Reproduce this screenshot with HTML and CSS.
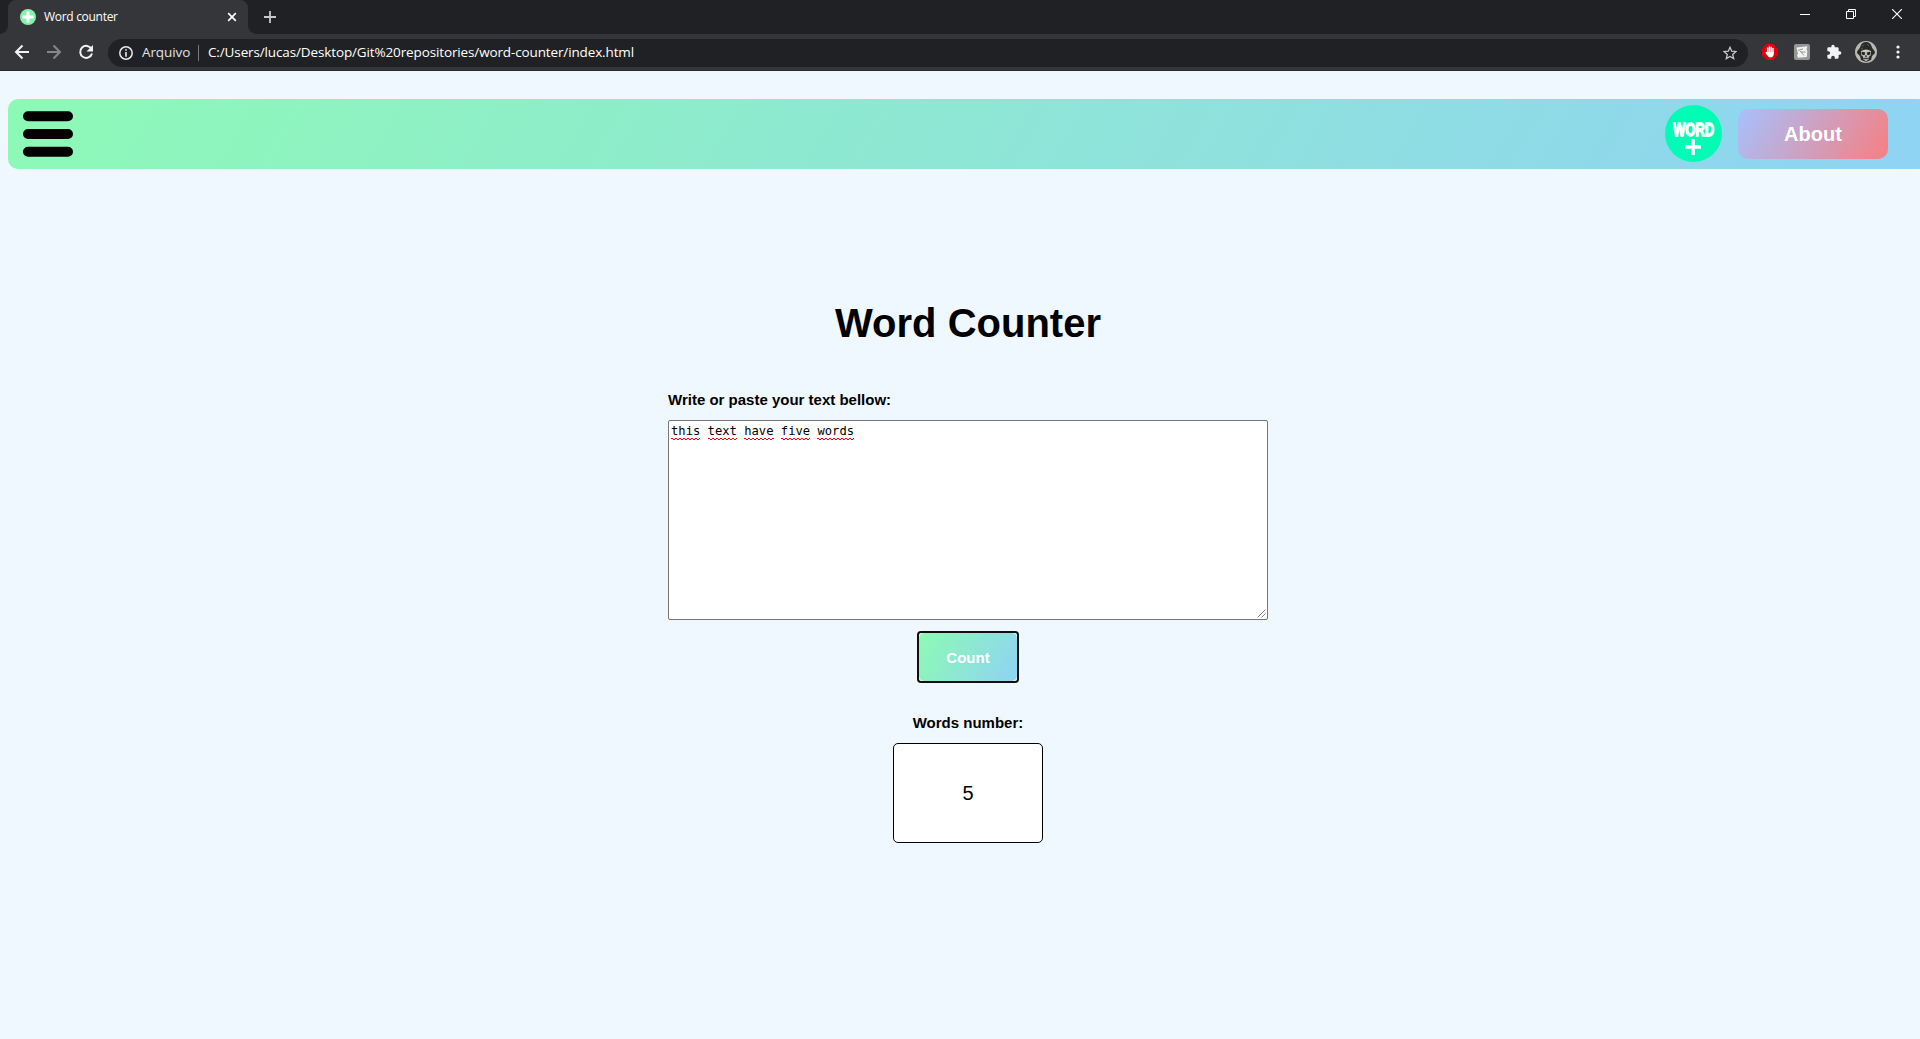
FILE: index.html
```html
<!DOCTYPE html>
<html lang="pt-BR">
<head>
<meta charset="utf-8">
<title>Word counter</title>
<link rel="stylesheet" href="styles.css">
</head>
<body>
<header class="browser">
  <div class="tabstrip">
    <div class="tab">
      <svg class="favicon" width="16" height="16" viewBox="0 0 16 16"><circle cx="8" cy="8" r="8" fill="#84f0ac"/><path d="M8 2.5v11M2.5 8h11" stroke="#fff" stroke-width="3"/></svg>
      <span class="tab-title">Word counter</span>
      <svg class="tab-close" width="10" height="10" viewBox="0 0 10 10"><path d="M1.2 1.2l7.6 7.6M8.8 1.2L1.2 8.8" stroke="#fff" stroke-width="1.7"/></svg>
    </div>
    <svg class="new-tab" width="12" height="12" viewBox="0 0 12 12"><path d="M6 0v12M0 6h12" stroke="#c6c8ca" stroke-width="1.8"/></svg>
    <div class="window-controls">
      <svg width="10" height="10" viewBox="0 0 10 10"><path d="M0 5.5h10" stroke="#fff"/></svg>
      <svg width="10" height="10" viewBox="0 0 10 10" fill="none" stroke="#fff"><path d="M.5 2.5h7v7h-7zM2.500 2V.5h7v7H8"/></svg>
      <svg width="10" height="10" viewBox="0 0 10 10"><path d="M0 0l10 10M10 0L0 10" stroke="#fff" stroke-width="1.1"/></svg>
    </div>
  </div>
  <div class="toolbar">
    <svg class="nav-icon" width="16" height="16" viewBox="0 0 16 16" fill="none" stroke="#f1f3f4" stroke-width="2"><path d="M15 8H2.500M8.500 1.500L2 8l6.500 6.500"/></svg>
    <svg class="nav-icon" width="16" height="16" viewBox="0 0 16 16" fill="none" stroke="#85878a" stroke-width="2"><path d="M1 8h12.500M7.500 1.500L14 8l-6.500 6.500"/></svg>
    <svg class="nav-icon" width="16" height="16" viewBox="0 0 16 16"><path d="M13.500 5A6 6 0 1 0 14 9.500" fill="none" stroke="#f1f3f4" stroke-width="2"/><path d="M15 1v6.500H8.500z" fill="#f1f3f4"/></svg>
    <div class="omnibox">
      <svg width="14" height="14" viewBox="0 0 14 14"><circle cx="7" cy="7" r="6.200" fill="none" stroke="#e8eaed" stroke-width="1.500"/><path d="M7 3.200v1.600M7 6v4.700" stroke="#e8eaed" stroke-width="1.600"/></svg>
      <span class="scheme">Arquivo</span>
      <span class="divider"></span>
      <span class="url">C:/Users/lucas/Desktop/Git%20repositories/word-counter/index.html</span>
      <svg class="star" width="14" height="14" viewBox="0 0 14 14"><path d="M7 1.300l1.700 3.900 4.200.4-3.200 2.800 1 4.200L7 10.400l-3.700 2.200 1-4.200L1.100 5.600l4.200-.4z" fill="none" stroke="#c4c6c8" stroke-width="1.300"/></svg>
    </div>
    <div class="extensions">
      <svg width="16" height="16" viewBox="0 0 16 16"><path d="M4.700 0h6.600L16 4.700v6.600L11.300 16H4.700L0 11.300V4.700z" fill="#e1000f"/><path d="M5.600 9.500V4.200M7.400 8V3M9.200 8V3.200M11 9V4.500" stroke="#fff" stroke-width="1.500" stroke-linecap="round"/><path d="M4.900 8h6.800v2.500q-.4 3-3.200 3-2 0-3-1.800L3.300 8.800l.8-.7z" fill="#fff"/></svg>
      <svg width="16" height="16" viewBox="0 0 16 16"><rect width="16" height="16" rx="2" fill="#969696"/><path d="M2.500 3.500L13.500 2.200l-1 3 .8 2-.5 5.800-9 .8L3 11l1-1z" fill="#f2f2f2"/><path d="M4 6.500l5-1.700M6 7.500q2 1 5.500.5M7 8l3 3.500" stroke="#969696" fill="none"/></svg>
      <svg width="16" height="16" viewBox="0 0 24 24"><path d="M20.500 11H19V7a2 2 0 0 0-2-2h-4V3.500a2.500 2.500 0 0 0-5 0V5H4a2 2 0 0 0-2 2v3.800h1.500a2.700 2.700 0 0 1 0 5.400H2V20a2 2 0 0 0 2 2h3.800v-1.500a2.700 2.700 0 0 1 5.400 0V22H17a2 2 0 0 0 2-2v-4h1.500a2.500 2.500 0 0 0 0-5z" fill="#f1f3f4"/></svg>
      <svg width="22" height="22" viewBox="0 0 22 22"><circle cx="11" cy="11" r="11" fill="#b9b9b3"/><path d="M2 12C2 9 5 8 5.500 5Q7 1 11 1t5.500 4C17 8 20 9 20 12l-3 3-1 4-5 2-5-2-1-4z" fill="#292a29"/><path d="M7 5.500l2-2M12 3l2 2M6 8l2-1" stroke="#666" stroke-width=".8"/><path d="M6 10Q11 7 16 10l-.3 4.200-1.900 1.500v2.500L11 20.500l-2.800-2.300v-2.500l-1.900-1.500z" fill="#c9c9c3"/><path d="M6.800 11l3.200.5-.5 2.500-2.300-.3zM15.200 11l-3.200.5.500 2.500 2.300-.3zM11 14l-.8 1.700h1.600zM8.500 17h5v.6h-5zM10 17v2.500M12 17v2.500" fill="#1d1d1d" stroke="#1d1d1d" stroke-width=".4"/></svg>
      <svg width="4" height="14" viewBox="0 0 4 14" fill="#f1f3f4"><circle cx="2" cy="2" r="1.600"/><circle cx="2" cy="7" r="1.600"/><circle cx="2" cy="12" r="1.600"/></svg>
    </div>
  </div>
</header>
<div class="page">
  <nav class="navbar">
    <svg width="50" height="46" viewBox="0 0 50 46"><path d="M5 5.300h40M5 23h40M5 40.700h40" stroke="#000" stroke-width="10" stroke-linecap="round"/></svg>
    <div class="nav-right">
      <div class="logo"><span class="logo-word">WORD</span><svg width="16" height="16" viewBox="0 0 16 16"><path d="M8 0v16M0 8h16" stroke="#fff" stroke-width="3.600"/></svg></div>
      <a class="about">About</a>
    </div>
  </nav>
  <main class="counter">
    <h1>Word Counter</h1>
    <div class="field">
      <label>Write or paste your text bellow:</label>
      <div class="textarea">
        <span class="typo">this</span> <span class="typo">text</span> <span class="typo">have</span> <span class="typo">five</span> <span class="typo">words</span>
        <svg class="grip" width="9" height="9" viewBox="0 0 9 9"><path d="M.5 8.500l8-8M4.500 8.500l4-4" stroke="#777" stroke-width=".9"/></svg>
      </div>
    </div>
    <div class="focus-ring"><button class="count">Count</button></div>
    <div class="result-label">Words number:</div>
    <div class="result">5</div>
  </main>
</div>
</body>
</html>
```
FILE: styles.css
```css
* { box-sizing: border-box; }
html, body { height: 100%; }
body { margin: 0; overflow: hidden; background: #f0f8ff; font-family: "Liberation Sans", Arial, sans-serif; color: #000; display: flex; flex-direction: column; }
svg { display: block; flex: none; }

.browser { flex: none; height: 71px; background: #35363a; border-bottom: 1px solid #292a2d; font-family: "Open Sans", "Noto Sans", sans-serif; color: #fff; }
.tabstrip { height: 34px; background: #202124; display: flex; align-items: flex-start; padding: 0 18px 0 8px; }
.tab { position: relative; width: 240px; height: 34px; background: #35363a; border-radius: 8px 8px 0 0; display: flex; align-items: center; padding: 0 11px 0 12px; }
.tab::before, .tab::after { content: ""; position: absolute; bottom: 0; width: 8px; height: 8px; }
.tab::before { left: -8px; background: radial-gradient(circle at 0 0, #202124 7.500px, #35363a 8px); }
.tab::after { right: -8px; background: radial-gradient(circle at 100% 0, #202124 7.500px, #35363a 8px); }
.tab-title { flex: 1; margin-left: 8px; padding-bottom: 2px; font-size: 12px; letter-spacing: -.3px; }
.new-tab { margin: 11px 0 0 16px; }
.window-controls { display: flex; gap: 36px; margin: 9px 0 0 auto; }

.toolbar { height: 36px; display: flex; align-items: center; padding: 0 20px 0 14px; }
.nav-icon { margin-right: 16px; }
.omnibox { flex: 1; height: 28px; margin-top: 1px; background: #202124; border-radius: 14px; display: flex; align-items: center; padding: 0 11px 0 11px; margin-left: -2px; font-size: 13.500px; }
.scheme { width: 49px; margin-left: 9px; padding-bottom: 2px; color: #e0e2e4; white-space: nowrap; letter-spacing: -.1px; }
.divider { width: 1px; height: 16px; background: #777a7e; margin: 0 9px 0 7px; }
.url { white-space: nowrap; padding-bottom: 2px; letter-spacing: -.13px; }
.star { margin-left: auto; }
.extensions { display: flex; align-items: center; gap: 16px; margin-left: 14px; }
.extensions svg:nth-child(4) { margin-left: -3px; }
.extensions svg:nth-child(5) { margin-left: 3px; }

.page { width: 1928px; flex: 1; padding: 28px 0 0 8px; }
.navbar { height: 70px; border-radius: 10px; background: linear-gradient(120deg, #8df9b6, #8fd3f4); display: flex; align-items: center; justify-content: space-between; padding: 0 40px 0 15px; }
.nav-right { display: flex; align-items: center; gap: 16px; }
.logo { width: 57px; height: 57px; margin-top: -1px; border-radius: 50%; background: #00fdb5; display: flex; flex-direction: column; align-items: center; padding: 17px 1px 0 0; }
.logo-word { height: 17px; line-height: 17px; font-size: 18px; font-weight: 900; color: #fff; transform: scaleX(.72); -webkit-text-stroke: 1.4px #fff; }
.about { width: 150px; height: 50px; line-height: 50px; border-radius: 10px; background: linear-gradient(120deg, #a6c1fe, #f77f82); color: #fff; font-size: 20px; font-weight: bold; text-align: center; }

.counter { display: flex; flex-direction: column; align-items: center; padding-top: 131px; }
h1 { margin: 0; font-size: 40px; line-height: 46px; }
.field { width: 600px; margin-top: 45px; }
label, .result-label { display: block; font-size: 15px; line-height: 17px; font-weight: bold; }
.textarea { position: relative; height: 200px; margin-top: 12px; padding: 2px; background: #fff; border: 1px solid #767676; border-radius: 2px; font: 12.170px/16px "DejaVu Sans Mono", monospace; }
.typo { padding-bottom: 2px; background: linear-gradient(45deg, transparent 35%, #f00 35% 65%, transparent 65%) 0 100% / 4px 2px repeat-x, linear-gradient(-45deg, transparent 35%, #f00 35% 65%, transparent 65%) 2px 100% / 4px 2px repeat-x; }
.grip { position: absolute; right: 1px; bottom: 1px; }
.focus-ring { width: 102px; height: 52px; margin-top: 11px; border: 2px solid #101010; border-radius: 4px; background: #fff; }
.count { display: block; width: 98px; height: 48px; padding: 0; border: 0; border-radius: 5px; background: linear-gradient(120deg, #8cfbb3, #8fd3f4); color: #fff; font: bold 15px "Liberation Sans", Arial, sans-serif; }
.result-label { margin-top: 31px; }
.result { width: 150px; height: 100px; margin-top: 12px; border: 1px solid #000; border-radius: 5px; background: #fff; font-size: 20px; line-height: 98px; text-align: center; }
```
